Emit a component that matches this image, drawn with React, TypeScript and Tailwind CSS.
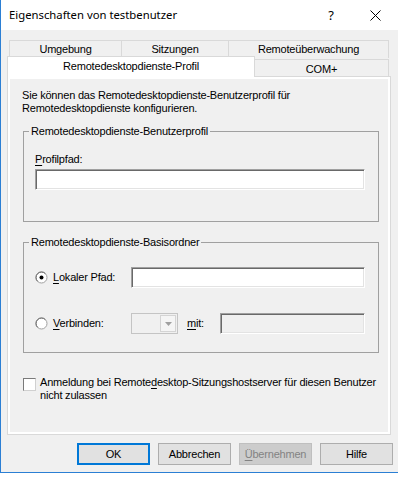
import type { ReactNode } from 'react'

const sunken =
  'border border-t-[#a0a0a0] border-l-[#a0a0a0] border-b-white border-r-white shadow-[inset_1px_1px_0_#696969,inset_-1px_-1px_0_#e3e3e3]'

function U({ children }: { children: ReactNode }) {
  return <span className="underline underline-offset-[2px]">{children}</span>
}

function Tab({
  label,
  width,
  selected = false,
}: {
  label: string
  width: string
  selected?: boolean
}) {
  return (
    <div
      className={
        selected
          ? `relative z-10 -mb-px flex h-[21px] items-center justify-center border border-b-0 border-[#d9d9d9] bg-white pb-px ${width}`
          : `-ml-px flex h-[18px] items-center justify-center border border-b-0 border-[#d9d9d9] bg-[#f0f0f0] first:ml-0 ${width}`
      }
    >
      {label}
    </div>
  )
}

function Radio({ checked }: { checked?: boolean }) {
  return (
    <svg width="13" height="13" viewBox="0 0 13 13" className="shrink-0">
      <circle cx="6.5" cy="6.5" r="5.5" fill="#fff" stroke="#a0a0a0" />
      <path d="M2.6 10.4 A5.5 5.5 0 0 1 10.4 2.6" fill="none" stroke="#696969" />
      {checked && <circle cx="6.5" cy="6.5" r="2" fill="#000" />}
    </svg>
  )
}

function Button({
  children,
  primary,
  disabled,
}: {
  children: ReactNode
  primary?: boolean
  disabled?: boolean
}) {
  const cls = primary
    ? 'border-2 border-[#0078d7] bg-[#e1e1e1] text-black'
    : disabled
      ? 'border border-[#bfbfbf] bg-[#cccccc] text-[#838383]'
      : 'border border-[#adadad] bg-[#e1e1e1] text-black'
  return (
    <div className={`flex h-[22px] w-[73px] items-center justify-center ${cls}`}>
      {children}
    </div>
  )
}

export default function App() {
  return (
    <div className="h-[482px] w-[398px] overflow-hidden bg-white font-['Liberation_Sans',Arial,sans-serif] text-[11px] leading-[13px] tracking-[-0.2px] text-black">
      <div className="flex h-[473px] flex-col border-b border-l border-[#2b7fd4]">
        {/* title bar */}
        <div className="flex h-[30px] items-center bg-white">
          <div className="ml-[8px] flex-1 pb-[1px] font-['Noto_Sans',sans-serif] text-[11.3px] tracking-normal">
            Eigenschaften von testbenutzer
          </div>
          <div className="mr-[36px] font-['Noto_Sans',sans-serif] text-[13px] tracking-normal">?</div>
          <svg width="11" height="11" viewBox="0 0 11 11" className="mr-[17px]">
            <path d="M0.5 0.5 L10.5 10.5 M10.5 0.5 L0.5 10.5" stroke="#000" strokeWidth="1" />
          </svg>
        </div>

        {/* body */}
        <div className="flex flex-1 flex-col bg-[#f0f0f0] pt-[10px]">
          <div className="ml-[8px] flex">
            <Tab label="Umgebung" width="w-[113px]" />
            <Tab label="Sitzungen" width="w-[108px]" />
            <Tab label="Remoteüberwachung" width="w-[161px]" />
          </div>
          <div className="ml-[6px] flex h-[18px] items-end">
            <Tab label="Remotedesktopdienste-Profil" width="w-[248px]" selected />
            <div className="mb-[-1px] -ml-px flex h-[18px] w-[135px] items-center justify-center border border-b-0 border-[#d9d9d9] bg-[#f0f0f0] pt-px">
              COM+
            </div>
          </div>

          {/* panel */}
          <div className="ml-[6px] flex h-[359px] w-[384px] flex-col border border-[#d9d9d9] bg-white p-[2px]">
            <div className="flex flex-1 flex-col bg-[#f0f0f0]">
              <p className="ml-[12px] mt-[10px]">
                Sie können das Remotedesktopdienste-Benutzerprofil für
                <br />
                Remotedesktopdienste konfigurieren.
              </p>

              <fieldset className="ml-[13px] mt-[10px] h-[97px] w-[356px] border border-[#a0a0a0] pl-[11px]">
                <legend className="ml-[-6px] px-[2px]">Remotedesktopdienste-Benutzerprofil</legend>
                <div className="mt-[15px]">
                  <U>P</U>rofilpfad:
                </div>
                <div className={`mt-[3px] h-[21px] w-[330px] bg-white ${sunken}`} />
              </fieldset>

              <fieldset className="ml-[13px] mt-[14px] h-[117px] w-[356px] border border-[#a0a0a0] pl-[11px]">
                <legend className="ml-[-6px] px-[2px]">Remotedesktopdienste-Basisordner</legend>
                <div className="mt-[18px] flex h-[21px] items-center">
                  <Radio checked />
                  <span className="ml-[5px] w-[78px]">
                    <U>L</U>okaler Pfad:
                  </span>
                  <div className={`h-[21px] w-[234px] bg-white ${sunken}`} />
                </div>
                <div className="mt-[25px] flex h-[21px] items-center">
                  <Radio />
                  <span className="ml-[5px] w-[78px]">
                    <U>V</U>erbinden:
                  </span>
                  <div className="flex h-[21px] w-[47px] border border-[#c4c4c4] bg-[#f0f0f0]">
                    <div className="flex-1" />
                    <div className="m-px flex w-[16px] items-center justify-center border border-[#d4d4d4] bg-[#f5f5f5]">
                      <svg width="7" height="4" viewBox="0 0 7 4">
                        <path d="M0 0 L7 0 L3.5 4 Z" fill="#a0a0a0" />
                      </svg>
                    </div>
                  </div>
                  <span className="ml-[9px] w-[33px]">
                    <U>m</U>it:
                  </span>
                  <div className={`h-[21px] w-[145px] bg-[#f0f0f0] ${sunken}`} />
                </div>
              </fieldset>

              <div className="ml-[13px] mt-[24px] flex">
                <div className="mt-[1px] h-[13px] w-[13px] shrink-0 border border-t-[#7a7a7a] border-l-[#7a7a7a] border-b-[#d0d0d0] border-r-[#d0d0d0] bg-white" />
                <p className="ml-[4px] mt-[-1px] whitespace-nowrap">
                  Anmeldung bei Remote<U>d</U>esktop-Sitzungshostserver für diesen Benutzer
                  <br />
                  nicht zulassen
                </p>
              </div>
            </div>
          </div>

          {/* buttons */}
          <div className="ml-[76px] mt-[8px] flex gap-[8px]">
            <Button primary>OK</Button>
            <Button>Abbrechen</Button>
            <Button disabled>
              <span>
                <U>Ü</U>bernehmen
              </span>
            </Button>
            <Button>Hilfe</Button>
          </div>
        </div>
      </div>
    </div>
  )
}
